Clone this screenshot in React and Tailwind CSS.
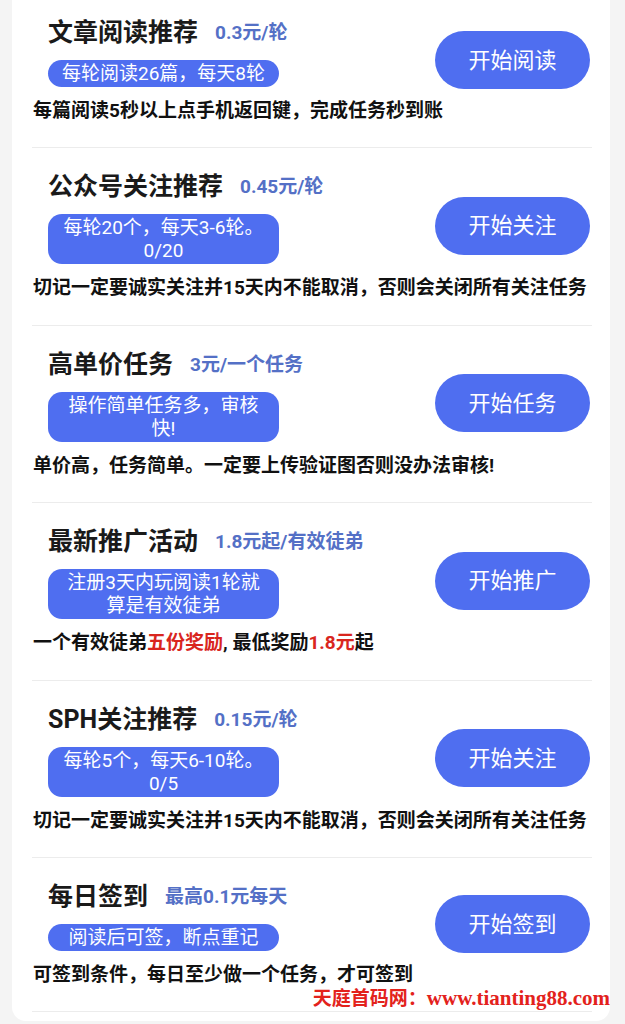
const tasks = [
  {
    title: '文章阅读推荐',
    price: '0.3元/轮',
    badge: ['每轮阅读26篇，每天8轮'],
    desc: '每篇阅读5秒以上点手机返回键，完成任务秒到账',
    action: '开始阅读',
  },
  {
    title: '公众号关注推荐',
    price: '0.45元/轮',
    badge: ['每轮20个，每天3-6轮。', '0/20'],
    desc: '切记一定要诚实关注并15天内不能取消，否则会关闭所有关注任务',
    action: '开始关注',
  },
  {
    title: '高单价任务',
    price: '3元/一个任务',
    badge: ['操作简单任务多，审核', '快!'],
    desc: '单价高，任务简单。一定要上传验证图否则没办法审核!',
    action: '开始任务',
  },
  {
    title: '最新推广活动',
    price: '1.8元起/有效徒弟',
    badge: ['注册3天内玩阅读1轮就', '算是有效徒弟'],
    desc: (
      <>
        一个有效徒弟<span className="text-[#d9261e]">五份奖励</span>, 最低奖励
        <span className="text-[#d9261e]">1.8元</span>起
      </>
    ),
    action: '开始推广',
  },
  {
    title: 'SPH关注推荐',
    price: '0.15元/轮',
    badge: ['每轮5个，每天6-10轮。', '0/5'],
    desc: '切记一定要诚实关注并15天内不能取消，否则会关闭所有关注任务',
    action: '开始关注',
  },
  {
    title: '每日签到',
    price: '最高0.1元每天',
    badge: ['阅读后可签，断点重记'],
    desc: '可签到条件，每日至少做一个任务，才可签到',
    action: '开始签到',
  },
];

function TaskRow({ task, first, last }) {
  const twoLines = task.badge.length > 1;
  return (
    <div
      className={`relative border-b border-[#ececec] ${first ? 'pt-[18px] pb-[24px]' : 'pt-[24px]'} ${
        !first && twoLines ? 'pb-[24.5px]' : ''
      } ${!first && !twoLines ? 'pb-[24px]' : ''}`}
    >
      <div className="flex items-center justify-between pr-[2px]">
        <div className="pl-[16px]">
          <div className="flex items-center h-[30px]">
            <span className="text-[25px] leading-[30px] font-bold text-[#1a1a1a]">{task.title}</span>
            <span className="ml-[17px] text-[19px] leading-[24px] font-bold text-[#5470c6]">{task.price}</span>
          </div>
          <div className="mt-[12px] w-[231px] rounded-[14px] bg-[#4f6ef0] py-[2px] text-center text-[19px] leading-[23px] text-white whitespace-nowrap">
            {task.badge.map((line, i) => (
              <div key={i}>{line}</div>
            ))}
          </div>
        </div>
        <button className="mt-[8px] -mb-[7px] w-[155px] h-[58px] rounded-full bg-[#4f6ef0] text-[22px] text-white">
          {task.action}
        </button>
      </div>
      <p className="mt-[12px] pl-[1px] text-[19px] leading-[24px] font-bold text-[#111] whitespace-nowrap">
        {task.desc}
      </p>
      {last && (
        <div className="absolute right-[-18px] bottom-[1px] leading-[20px] font-bold text-[#e3221c] font-['Liberation_Serif','Noto_Sans_CJK_SC',serif] whitespace-nowrap">
          <span className="text-[19px] font-['Noto_Sans_CJK_SC',sans-serif]">天庭首码网：</span>
          <span className="text-[21px]">www.tianting88.com</span>
        </div>
      )}
    </div>
  );
}

export default function App() {
  return (
    <div className="min-h-screen bg-[#f4f4f4] pl-[12px] font-['Roboto','Noto_Sans_CJK_SC',sans-serif]">
      <div className="w-[598px] bg-white rounded-b-[14px] pl-[20px] pr-[18px] pb-[9px]">
        {tasks.map((t, i) => (
          <TaskRow key={i} task={t} first={i === 0} last={i === tasks.length - 1} />
        ))}
      </div>
    </div>
  );
}
